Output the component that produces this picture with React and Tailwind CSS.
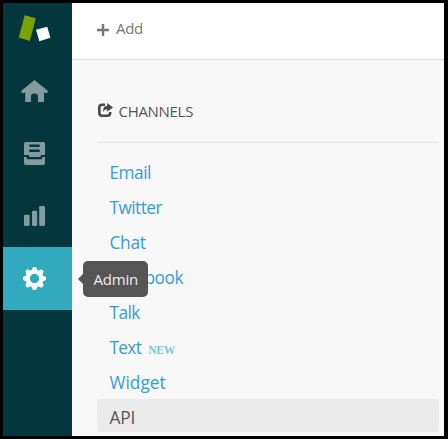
import React from "react";

const channels = [
  { label: "Email", tracking: "tracking-[-0.5px]" },
  { label: "Twitter", tracking: "tracking-[-0.55px]" },
  { label: "Chat", tracking: "tracking-[-0.3px]" },
  { label: "Facebook", tracking: "tracking-[-0.4px]" },
  { label: "Talk", tracking: "tracking-[-0.6px]" },
  { label: "Text", tracking: "tracking-[-0.7px]", isNew: true },
  { label: "Widget", tracking: "tracking-[0px]" },
  { label: "API", tracking: "tracking-[-0.1px]", selected: true },
];

function Logo() {
  return (
    <svg viewBox="0 0 69 57" className="block h-[57px] w-[69px]">
      <path d="M21.7 12.2 32.8 15.3 26.8 38 15.7 34.6Z" fill="#78a300" />
      <path d="M33 26.8 44.2 23.8 47.4 34.8 36.4 38.2Z" fill="#fff" />
    </svg>
  );
}

function HomeIcon() {
  return (
    <svg viewBox="0 0 69 62" className="block h-[62px] w-[69px]" fill="#819b9f">
      <path d="M31.5 20.1 17.8 31.3 20 33.5 22.2 32.2V42H28V36.2Q28 33.4 31.5 33.4T35 36.2V42H41V32.2L43.2 33.5 45.3 31.3Z" />
    </svg>
  );
}

function ViewsIcon() {
  return (
    <svg viewBox="0 0 69 63" className="block h-[63px] w-[69px]">
      <path d="M22.6 20H40.4Q42 20 42 21.6V33H37.6V35H26V33H21V21.6Q21 20 22.6 20Z" fill="#819b9f" />
      <path d="M21 35H23.8V37.2H39.2V35H42V41.2Q42 43 40.3 43H22.7Q21 43 21 41.2Z" fill="#819b9f" />
      <path d="M27.3 23.7H35.7M27.3 28.7H35.7" stroke="#03363d" strokeWidth="2.6" strokeLinecap="round" />
    </svg>
  );
}

function ReportsIcon() {
  return (
    <svg viewBox="0 0 69 62" className="block h-[62px] w-[69px]" fill="#819b9f">
      <rect x="21" y="29.8" width="5.6" height="11.2" rx="1.3" />
      <rect x="29" y="25.8" width="5.2" height="15.2" rx="1.3" />
      <rect x="36.2" y="21" width="5.8" height="20" rx="1.3" />
    </svg>
  );
}

function GearIcon() {
  return (
    <svg viewBox="-31.5 -31.5 69 63" className="block h-[63px] w-[69px]">
      <circle r="6.8" fill="none" stroke="#fff" strokeWidth="4.2" />
      {[0, 45, 90, 135, 180, 225, 270, 315].map((a) => (
        <path key={a} d="M-3-8 -1.5-11.5H1.5L3-8Z" transform={`rotate(${a})`} fill="#fff" />
      ))}
    </svg>
  );
}

export default function App() {
  return (
    <div className="flex h-[439px] w-[448px] overflow-hidden border-[3px] border-r-4 border-black bg-[#f8f8f8] font-['Open_Sans','Noto_Sans',sans-serif]">
      <nav className="flex w-[69px] shrink-0 flex-col bg-[#03363d]">
        <Logo />
        <HomeIcon />
        <ViewsIcon />
        <ReportsIcon />
        <div className="relative bg-[#30aabc]">
          <GearIcon />
          <div className="absolute left-[80px] top-[14px] z-10 h-9 w-[65px] rounded-[5px] bg-[#555] pl-[10.5px] text-[15px] leading-9 tracking-[-0.2px] text-[#eee]">
            <svg viewBox="0 0 6 12" className="absolute -left-[5px] top-3 h-3 w-1.5" fill="#555">
              <path d="M0 6 6 0V12Z" />
            </svg>
            Admin
          </div>
        </div>
      </nav>
      <main className="flex min-w-0 flex-1 flex-col">
        <header className="flex h-[57px] shrink-0 border-b border-[#ddd] bg-white pl-[25px] text-[#777]">
          <svg viewBox="0 0 12 12" className="mt-[20.5px] h-3 w-3" stroke="#777" strokeWidth="2.4">
            <path d="M0 6H12M6 0V12" />
          </svg>
          <span className="ml-[7px] text-[15px] leading-[51px] tracking-[-0.3px]">Add</span>
        </header>
        <section className="flex flex-col pl-[25px] pr-[5px]">
          <h2 className="flex h-[83px] border-b border-[#e4e4e4] text-[#555]">
            <svg viewBox="0 0 16 15" className="mt-[43px] h-[15px] w-4" fill="none">
              <path d="M8 1.8H5.2Q2.3 1.8 2.3 4.7V9.8Q2.3 12.7 5.2 12.7H10.3Q13.2 12.7 13.2 9.8V9" stroke="#484848" strokeWidth="2.6" />
              <path d="M10.2 0 16 4.5 10.2 8.8V6.2Q7.6 6 6 8.8 5.9 3 10.2 2.8Z" fill="#484848" />
            </svg>
            <span className="ml-[5.5px] mt-[41px] text-[15px] leading-5 tracking-[-0.3px]">CHANNELS</span>
          </h2>
          <ul className="mt-[11px] flex flex-col gap-[2px]">
            {channels.map(({ label, tracking, selected, isNew }) => (
              <li
                key={label}
                className={`flex h-[33px] rounded pl-[12.5px] ${selected ? "bg-[#ebebeb] text-[#555]" : "text-[#369dd4]"}`}
              >
                <span className={`pt-[4px] text-[17.3px] leading-[29px] ${tracking}`}>{label}</span>
                {isNew && (
                  <span className="ml-[7px] mt-[5px] font-['Liberation_Serif',serif] text-[11.5px] font-bold leading-[33px] tracking-[-0.2px] text-[#78c6e2]">
                    NEW
                  </span>
                )}
              </li>
            ))}
          </ul>
        </section>
      </main>
    </div>
  );
}
